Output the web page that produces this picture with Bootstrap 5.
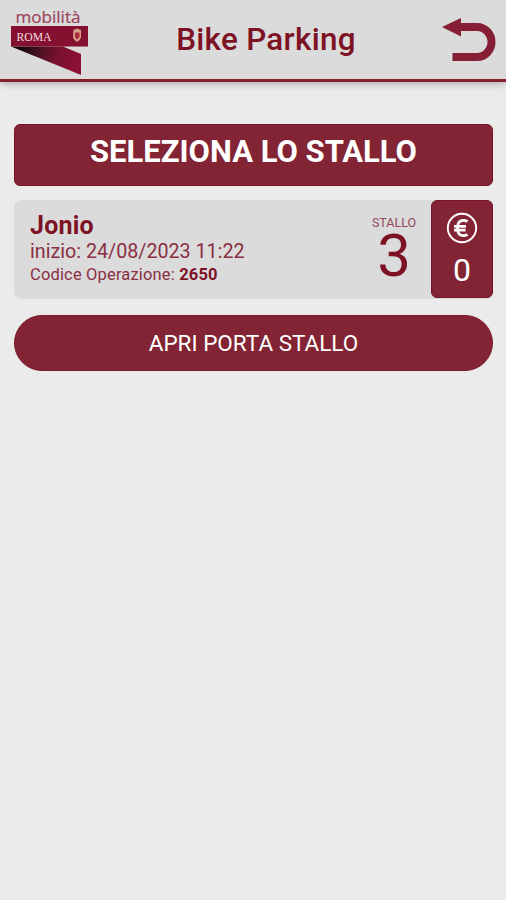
<!DOCTYPE html>
<html lang="it">
<head>
<meta charset="utf-8">
<meta name="viewport" content="width=device-width, initial-scale=1">
<title>Bike Parking</title>
<link href="https://cdn.jsdelivr.net/npm/bootstrap@5.3.0/dist/css/bootstrap.min.css" rel="stylesheet">
<style>
  :root { --wine: #822433; --ink: #7d1224; --panel: #dbdbdb; }
  body { background: #ebebeb; color: var(--ink); font-family: Roboto, "Liberation Sans", sans-serif; min-height: 900px; }
  .topbar { height: 82px; background: var(--panel); border-bottom: 3px solid #861f2c; box-shadow: 0 2px 7px rgba(0,0,0,.25); }
  .side { width: 96px; }
  .brand-side { width: 122px; }
  .brand-svg, .back-svg { display: block; }
  .page-title { font-size: 31.4px; font-weight: 500; line-height: 79px; letter-spacing: .3px; }
  .content { padding: 42px 13px 0 14px; }
  .headline { height: 62px; border-radius: 6px; background: var(--wine); border: 1px solid #76122a; font-size: 31px; font-weight: 700; line-height: 53px; }
  .stall { height: 99px; margin-top: 14px; border-radius: 7px; background: var(--panel); }
  .info { padding: 13px 0 0 16px; }
  .station { font-size: 25px; font-weight: 700; line-height: 26px; letter-spacing: .2px; }
  .start { font-size: 19.7px; line-height: 25px; color: #8a2f42; }
  .code { font-size: 16.5px; line-height: 21px; letter-spacing: .16px; color: #8a2f42; }
  .code b { color: var(--ink); }
  .slot { width: 74px; padding-top: 16px; }
  .slot-label { font-size: 12.5px; line-height: 14px; color: #93485a; }
  .slot-number { font-size: 60px; line-height: 51px; }
  .price { width: 62px; height: 98px; border-radius: 6px; background: var(--wine); border: 1px solid #76122a; padding-top: 11px; }
  .price-value { font-size: 32px; line-height: 38px; margin-top: 7px; }
  .open-btn, .open-btn:hover { height: 56px; margin-top: 16px; background: var(--wine); color: #fff; border: 1px solid #7b1a2c; font-size: 22.5px; line-height: 55px; padding: 0; }
</style>
</head>
<body>
<header class="topbar d-flex justify-content-between">
  <div class="brand-side">
    <svg class="brand-svg" width="96" height="79" viewBox="0 0 96 79" role="img" aria-label="mobilità Roma">
      <defs>
        <linearGradient id="fold" x1="20" y1="48" x2="75" y2="68" gradientUnits="userSpaceOnUse">
          <stop offset="0" stop-color="#10080b"/><stop offset=".3" stop-color="#451020"/><stop offset=".65" stop-color="#79122e"/><stop offset="1" stop-color="#8c1034"/>
        </linearGradient>
      </defs>
      <text x="15.500" y="22.500" font-family="Open Sans, sans-serif" font-size="16.500" fill="#9a4358" stroke="#9a4358" stroke-width=".2" textLength="65" lengthAdjust="spacingAndGlyphs">mobilità</text>
      <path d="M11 46.500H63L81 54V75Z" fill="url(#fold)"/>
      <path d="M11 26H88V46.500H11Z" fill="#86102f"/>
      <text x="16.500" y="41" font-family="Liberation Serif, serif" font-size="13" fill="#f0dce0" textLength="35" lengthAdjust="spacingAndGlyphs">ROMA</text>
      <path d="M73.500 30L77 28.500L81 30V37Q80.500 40 77 42Q73.500 40 73 37Z" fill="#d5a184"/>
      <path d="M75 32.500H79.500V37L77 39.500L75 37Z" fill="#a92b3c"/>
    </svg>
  </div>
  <h1 class="page-title m-0">Bike Parking</h1>
  <div class="side">
    <svg class="back-svg" width="96" height="79" viewBox="410 0 96 79" role="img" aria-label="Indietro">
      <path d="M459 27H477A14.500 15 0 0 1 477 57H452.500" fill="none" stroke="#861f35" stroke-width="8"/>
      <path d="M442 27L461 18V36.500Z" fill="#861f35"/>
    </svg>
  </div>
</header>
<main class="content">
  <h2 class="headline m-0 text-center text-white">SELEZIONA LO STALLO</h2>
  <section class="stall d-flex">
    <div class="info flex-grow-1">
      <div class="station"><span>Jonio</span></div>
      <div class="start"><span>inizio: 24/08/2023 11:22</span></div>
      <div class="code"><span>Codice Operazione: <b>2650</b></span></div>
    </div>
    <div class="slot text-center">
      <div class="slot-label">STALLO</div>
      <div class="slot-number">3</div>
    </div>
    <div class="price text-center text-white">
      <svg class="d-block mx-auto" width="32" height="32" viewBox="0 0 32 32" role="img" aria-label="Euro">
        <circle cx="16" cy="16" r="14.200" fill="none" stroke="#fff" stroke-width="1.900"/>
        <path d="M21.500 9.500Q19.500 8.300 17.500 8.300C13.500 8.300 11.500 11.500 11.500 16S13.500 23.700 17.500 23.700Q19.500 23.700 21.500 22.500M8 14.300H20M8 18.100H19.500" fill="none" stroke="#fff" stroke-width="2.700"/>
      </svg>
      <div class="price-value">0</div>
    </div>
  </section>
  <button type="button" class="open-btn btn rounded-pill w-100 d-block">APRI PORTA STALLO</button>
</main>
<script src="https://cdn.jsdelivr.net/npm/bootstrap@5.3.0/dist/js/bootstrap.bundle.min.js"></script>
</body>
</html>
